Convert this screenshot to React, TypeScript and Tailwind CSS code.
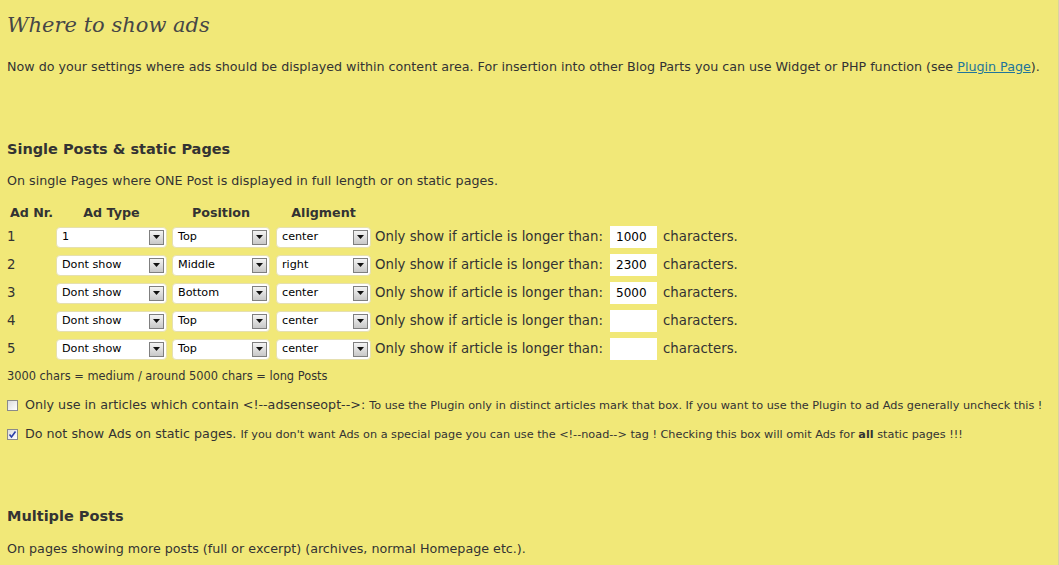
import React from 'react'

type Row = {
  nr: number
  type: string
  position: string
  align: string
  chars: string
}

const rows: Row[] = [
  { nr: 1, type: '1', position: 'Top', align: 'center', chars: '1000' },
  { nr: 2, type: 'Dont show', position: 'Middle', align: 'right', chars: '2300' },
  { nr: 3, type: 'Dont show', position: 'Bottom', align: 'center', chars: '5000' },
  { nr: 4, type: 'Dont show', position: 'Top', align: 'center', chars: '' },
  { nr: 5, type: 'Dont show', position: 'Top', align: 'center', chars: '' },
]

const FakeSelect = ({ value, width }: { value: string; width: string }) => (
  <div
    className={`${width} flex h-[21px] items-center justify-between rounded-[4px] border border-[#e6e0b0] bg-white pl-[5px] pr-[2px]`}
  >
    <span className="text-[11.2px] text-black">{value}</span>
    <span className="flex h-[15px] w-[15px] items-center justify-center border border-[#7f7f7f] bg-gradient-to-b from-[#f4f4f4] to-[#c8c8c8]">
      <svg width="7" height="4" viewBox="0 0 7 4">
        <path d="M0 0 L7 0 L3.5 4 Z" fill="#111" />
      </svg>
    </span>
  </div>
)

const Checkbox = ({ checked }: { checked?: boolean }) => (
  <span className="flex h-[11px] w-[11px] shrink-0 items-center justify-center border border-[#8a8a8a] bg-gradient-to-br from-[#dcdcdc] to-white">
    {checked && (
      <svg width="9" height="9" viewBox="0 0 9 9">
        <path d="M1.5 4.5 L3.5 7 L7.5 1.5" stroke="#2a3fa8" strokeWidth="1.6" fill="none" />
      </svg>
    )}
  </span>
)

const App = () => {
  return (
    <div className="min-h-[565px] border-r border-[#d8d2a0] bg-[#f1e878] px-[7px] font-['DejaVu_Sans',Verdana,sans-serif] text-[12.7px] text-[#333]">
      <h2 className="h-[50px] font-['DejaVu_Serif',Georgia,serif] text-[21px] italic leading-[50px] text-[#464646]">
        Where to show ads
      </h2>
      <p className="mt-[7px] h-[20px] leading-[20px]">
        Now do your settings where ads should be displayed within content area. For insertion into
        other Blog Parts you can use Widget or PHP function (see{' '}
        <a href="#" className="text-[#21759b] underline">
          Plugin Page
        </a>
        ).
      </p>

      <h3 className="mt-[62px] h-[20px] text-[14.5px] font-bold leading-[20px] text-[#333]">
        Single Posts &amp; static Pages
      </h3>
      <p className="mt-[12px] h-[20px] leading-[20px]">
        On single Pages where ONE Post is displayed in full length or on static pages.
      </p>

      <div className="mt-[12px] flex h-[20px] items-center font-bold">
        <div className="w-[49px] text-center">Ad Nr.</div>
        <div className="w-[111px] text-center">Ad Type</div>
        <div className="ml-[5px] w-[98px] text-center">Position</div>
        <div className="ml-[6px] w-[95px] text-center">Aligment</div>
      </div>

      {rows.map(r => (
        <div key={r.nr} className="flex h-[28px] items-center text-[13.3px]">
          <div className="w-[49px]">{r.nr}</div>
          <FakeSelect value={r.type} width="w-[111px]" />
          <div className="ml-[5px]">
            <FakeSelect value={r.position} width="w-[98px]" />
          </div>
          <div className="ml-[6px]">
            <FakeSelect value={r.align} width="w-[95px]" />
          </div>
          <span className="ml-[4px] w-[235px]">Only show if article is longer than:</span>
          <span className="flex h-[22px] w-[47px] items-center bg-white pl-[6px] text-[12px] text-black">
            {r.chars}
          </span>
          <span className="ml-[6px]">characters.</span>
        </div>
      ))}

      <p className="mt-[3px] h-[20px] text-[11.4px] leading-[20px]">
        3000 chars = medium / around 5000 chars = long Posts
      </p>

      <div className="mt-[9px] flex h-[20px] items-center gap-[7px]">
        <Checkbox />
        <span>
          Only use in articles which contain &lt;!--adsenseopt--&gt;:{' '}
          <span className="text-[11.25px]">
            To use the Plugin only in distinct articles mark that box. If you want to use the
            Plugin to ad Ads generally uncheck this !
          </span>
        </span>
      </div>

      <div className="mt-[9px] flex h-[20px] items-center gap-[7px]">
        <Checkbox checked />
        <span>
          Do not show Ads on static pages.{' '}
          <span className="text-[11.25px]">
            If you don't want Ads on a special page you can use the &lt;!--noad--&gt; tag !
            Checking this box will omit Ads for <b>all</b> static pages !!!
          </span>
        </span>
      </div>

      <h3 className="mt-[62px] h-[20px] text-[14.5px] font-bold leading-[20px] text-[#333]">
        Multiple Posts
      </h3>
      <p className="mt-[13px] h-[20px] leading-[20px]">
        On pages showing more posts (full or excerpt) (archives, normal Homepage etc.).
      </p>
    </div>
  )
}

export default App
